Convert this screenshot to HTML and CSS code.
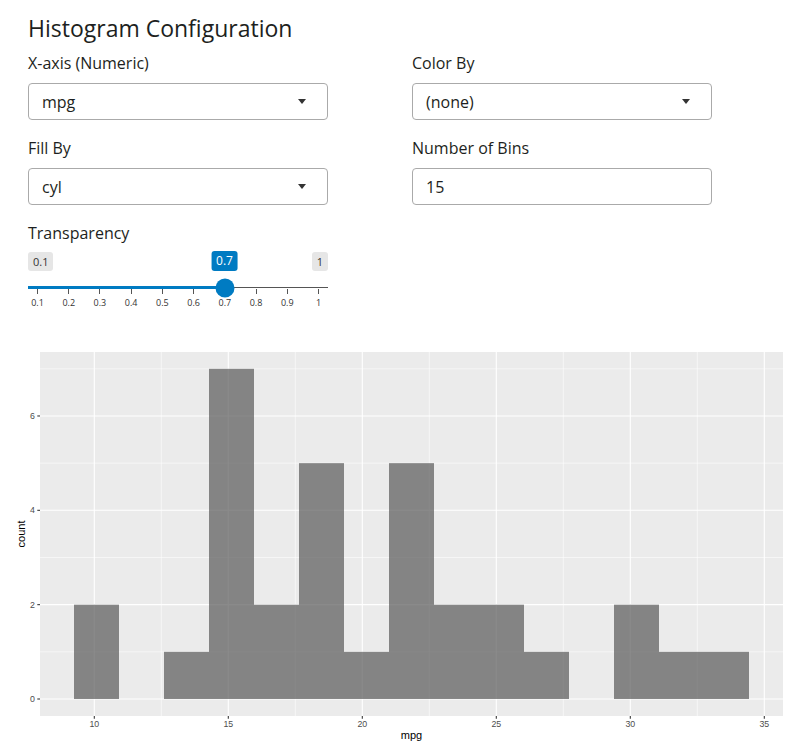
FILE: index.html
```html
<!DOCTYPE html>
<html>
<head>
<meta charset="utf-8">
<title>Histogram Configuration</title>
<link rel="stylesheet" href="styles.css">
</head>
<body>
<div class="config">
  <h3 class="title">Histogram Configuration</h3>
  <div class="grid">
    <div class="col">
      <div class="group">
        <label class="label">X-axis (Numeric)</label>
        <div class="select"><span>mpg</span><span class="caret"></span></div>
      </div>
      <div class="group">
        <label class="label">Fill By</label>
        <div class="select"><span>cyl</span><span class="caret"></span></div>
      </div>
      <div class="group">
        <label class="label label-slider">Transparency</label>
        <div class="slider">
          <div class="slider-labels">
            <span class="irs-minmax">0.1</span>
            <span class="irs-minmax">1</span>
            <span class="irs-single" style="left:196.5px">0.7</span>
          </div>
          <div class="track">
            <div class="track-line"></div>
            <div class="track-fill" style="width:196.5px"></div>
            <div class="handle" style="left:196.5px"></div>
          </div>
          <div class="ticks">
            <div class="tick"><span class="tick-mark"></span><span class="tick-label">0.1</span></div>
            <div class="tick"><span class="tick-mark"></span><span class="tick-label">0.2</span></div>
            <div class="tick"><span class="tick-mark"></span><span class="tick-label">0.3</span></div>
            <div class="tick"><span class="tick-mark"></span><span class="tick-label">0.4</span></div>
            <div class="tick"><span class="tick-mark"></span><span class="tick-label">0.5</span></div>
            <div class="tick"><span class="tick-mark"></span><span class="tick-label">0.6</span></div>
            <div class="tick"><span class="tick-mark"></span><span class="tick-label">0.7</span></div>
            <div class="tick"><span class="tick-mark"></span><span class="tick-label">0.8</span></div>
            <div class="tick"><span class="tick-mark"></span><span class="tick-label">0.9</span></div>
            <div class="tick"><span class="tick-mark"></span><span class="tick-label">1</span></div>
          </div>
        </div>
      </div>
    </div>
    <div class="col">
      <div class="group">
        <label class="label">Color By</label>
        <div class="select"><span>(none)</span><span class="caret"></span></div>
      </div>
      <div class="group">
        <label class="label">Number of Bins</label>
        <div class="input">15</div>
      </div>
    </div>
  </div>
</div>
<svg class="plot" width="800" height="405" viewBox="0 340 800 405" xmlns="http://www.w3.org/2000/svg">
  <rect x="40" y="352" width="743" height="364" fill="#EBEBEB"/>
  <g stroke="#FFFFFF" stroke-width="0.55">
    <line x1="40" x2="783" y1="651.83" y2="651.83"/>
    <line x1="40" x2="783" y1="557.49" y2="557.49"/>
    <line x1="40" x2="783" y1="463.15" y2="463.15"/>
    <line x1="40" x2="783" y1="368.81" y2="368.81"/>
    <line y1="352" y2="716" x1="161.3" x2="161.3"/>
    <line y1="352" y2="716" x1="295.3" x2="295.3"/>
    <line y1="352" y2="716" x1="429.3" x2="429.3"/>
    <line y1="352" y2="716" x1="563.3" x2="563.3"/>
    <line y1="352" y2="716" x1="697.3" x2="697.3"/>
  </g>
  <g stroke="#FFFFFF" stroke-width="1.1">
    <line x1="40" x2="783" y1="699" y2="699"/>
    <line x1="40" x2="783" y1="604.66" y2="604.66"/>
    <line x1="40" x2="783" y1="510.32" y2="510.32"/>
    <line x1="40" x2="783" y1="415.98" y2="415.98"/>
    <line y1="352" y2="716" x1="94.3" x2="94.3"/>
    <line y1="352" y2="716" x1="228.3" x2="228.3"/>
    <line y1="352" y2="716" x1="362.3" x2="362.3"/>
    <line y1="352" y2="716" x1="496.3" x2="496.3"/>
    <line y1="352" y2="716" x1="630.3" x2="630.3"/>
    <line y1="352" y2="716" x1="764.3" x2="764.3"/>
  </g>
  <g fill="#595959" fill-opacity="0.7">
    <rect x="74" y="604.66" width="45" height="94.34"/>
    <rect x="164" y="651.83" width="45" height="47.17"/>
    <rect x="209" y="368.81" width="45" height="330.19"/>
    <rect x="254" y="604.66" width="45" height="94.34"/>
    <rect x="299" y="463.15" width="45" height="235.85"/>
    <rect x="344" y="651.83" width="45" height="47.17"/>
    <rect x="389" y="463.15" width="45" height="235.85"/>
    <rect x="434" y="604.66" width="45" height="94.34"/>
    <rect x="479" y="604.66" width="45" height="94.34"/>
    <rect x="524" y="651.83" width="45" height="47.17"/>
    <rect x="614" y="604.66" width="45" height="94.34"/>
    <rect x="659" y="651.83" width="45" height="47.17"/>
    <rect x="704" y="651.83" width="45" height="47.17"/>
  </g>
  <g stroke="#333333" stroke-width="1.07">
    <line x1="37.3" x2="40" y1="699" y2="699"/>
    <line x1="37.3" x2="40" y1="604.66" y2="604.66"/>
    <line x1="37.3" x2="40" y1="510.32" y2="510.32"/>
    <line x1="37.3" x2="40" y1="415.98" y2="415.98"/>
    <line y1="716" y2="718.7" x1="94.3" x2="94.3"/>
    <line y1="716" y2="718.7" x1="228.3" x2="228.3"/>
    <line y1="716" y2="718.7" x1="362.3" x2="362.3"/>
    <line y1="716" y2="718.7" x1="496.3" x2="496.3"/>
    <line y1="716" y2="718.7" x1="630.3" x2="630.3"/>
    <line y1="716" y2="718.7" x1="764.3" x2="764.3"/>
  </g>
  <g class="axis-text" text-anchor="end">
    <text x="35" y="702.1">0</text>
    <text x="35" y="607.8">2</text>
    <text x="35" y="513.4">4</text>
    <text x="35" y="419.1">6</text>
  </g>
  <g class="axis-text" text-anchor="middle">
    <text x="94.3" y="727">10</text>
    <text x="228.3" y="727">15</text>
    <text x="362.3" y="727">20</text>
    <text x="496.3" y="727">25</text>
    <text x="630.3" y="727">30</text>
    <text x="764.3" y="727">35</text>
  </g>
  <text class="axis-title" x="411.5" y="739" text-anchor="middle">mpg</text>
  <text class="axis-title" x="0" y="0" text-anchor="middle" transform="translate(25 534) rotate(-90)">count</text>
</svg>
</body>
</html>
```
FILE: styles.css
```css
body {
  margin: 0;
  font-family: "Open Sans", "Noto Sans", sans-serif;
  color: #1d1f21;
  background: #ffffff;
  overflow: hidden;
}

.config {
  padding-left: 28px;
}

.title {
  margin: 14px 0 9px;
  font-size: 23px;
  font-weight: 400;
  line-height: 28px;
}

.grid {
  display: grid;
  grid-template-columns: 384px 384px;
}

.group {
  margin-bottom: 16px;
}

.label {
  display: block;
  font-size: 16px;
  line-height: 24px;
  margin-bottom: 8px;
}

.label-slider {
  margin-bottom: 0;
}

.select,
.input {
  box-sizing: border-box;
  width: 300px;
  height: 37px;
  border: 1px solid #aaaaaa;
  border-radius: 4px;
  font-size: 16px;
  color: #1d1f21;
  display: flex;
  align-items: center;
  justify-content: space-between;
  padding: 0 21px 0 13px;
}

.caret {
  width: 0;
  height: 0;
  border-left: 4px solid transparent;
  border-right: 4px solid transparent;
  border-top: 5px solid #333333;
}

.slider {
  width: 300px;
  height: 65px;
}

.slider-labels {
  position: relative;
  height: 41px;
  display: flex;
  justify-content: space-between;
  align-items: flex-start;
  padding-top: 7px;
  box-sizing: border-box;
}

.irs-minmax {
  background: #e6e6e6;
  color: #333333;
  font-size: 11px;
  line-height: 15px;
  padding: 2px 5px;
  border-radius: 3px;
}

.irs-single {
  position: absolute;
  top: 6px;
  transform: translateX(-50%);
  background: #007bc2;
  color: #ffffff;
  font-size: 12px;
  line-height: 16px;
  padding: 2px 5px;
  border-radius: 3px;
}

.track {
  position: relative;
  height: 3px;
}

.track-line {
  position: absolute;
  left: 0;
  right: 0;
  top: 1px;
  height: 1px;
  background: #555555;
}

.track-fill {
  position: absolute;
  left: 0;
  top: 0;
  height: 3px;
  background: #007bc2;
}

.handle {
  position: absolute;
  top: 50%;
  width: 19px;
  height: 19px;
  border-radius: 50%;
  background: #007bc2;
  transform: translate(-50%, -50%);
}

.ticks {
  display: flex;
  justify-content: space-between;
  padding: 0 9.5px;
}

.tick {
  width: 0;
  display: flex;
  flex-direction: column;
  align-items: center;
}

.tick-mark {
  width: 1px;
  height: 5px;
  background: #555555;
}

.tick-label {
  margin-top: 3px;
  font-size: 9px;
  line-height: 11px;
  color: #333333;
  white-space: nowrap;
}

.plot {
  display: block;
  margin-top: 14px;
}

.axis-text {
  font-family: "Liberation Sans", Arial, sans-serif;
  font-size: 8.8px;
  fill: #4d4d4d;
}

.axis-title {
  font-family: "Liberation Sans", Arial, sans-serif;
  font-size: 11px;
  fill: #000000;
}
```
